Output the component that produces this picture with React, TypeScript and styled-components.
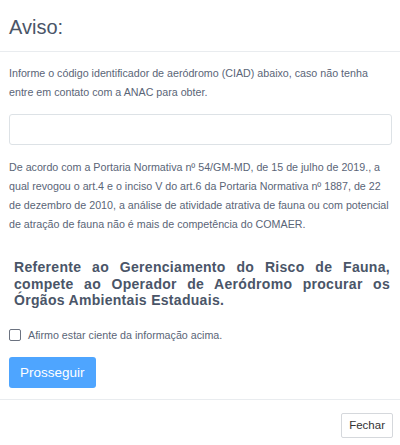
import React, { useState } from 'react'
import styled, { createGlobalStyle } from 'styled-components'

const GlobalStyle = createGlobalStyle`
    html, body {
        margin: 0;
        padding: 0;
        background: #fff;
        font-family: 'Liberation Sans', Arial, sans-serif;
    }
`

const Modal = styled.div`
    width: 400px;
    height: 445px;
    background: #fff;
    display: flex;
    flex-direction: column;
    color: #4a5568;
    overflow: hidden;
`

const Header = styled.div`
    flex-shrink: 0;
    height: 52px;
    padding: 4px 9px 0;
    display: flex;
    align-items: center;
    border-bottom: 1px solid #e9ecef;
    box-sizing: border-box;
`

const Title = styled.h4`
    margin: 0;
    font-size: 20px;
    font-weight: 400;
    color: #4a5568;
`

const Body = styled.div`
    flex-shrink: 0;
    padding: 12px 8px 11px 9px;
    border-bottom: 1px solid #e9ecef;
`

const Text = styled.p`
    margin: 0;
    font-size: 10.7px;
    line-height: 19px;
    color: #5a6577;
`

const Input = styled.input`
    display: block;
    box-sizing: border-box;
    width: 100%;
    height: 31px;
    margin: 12px 0 13px;
    border: 1px solid #dde2e6;
    border-radius: 3px;
    font-size: 13px;
    padding: 0 8px;
    outline: none;
`

const Notice = styled.p`
    margin: 25px 2px 0 5px;
    font-size: 14px;
    letter-spacing: 0.3px;
    font-weight: 700;
    line-height: 16.5px;
    text-align: justify;
    color: #4a5568;
`

const CheckRow = styled.label`
    display: flex;
    align-items: center;
    gap: 7px;
    margin-top: 20px;
    font-size: 10.7px;
    line-height: 12px;
    color: #5a6577;
    cursor: pointer;
`

const Box = styled.span<{ $checked: boolean }>`
    width: 10px;
    height: 10px;
    border: 1px solid #6b7280;
    border-radius: 2px;
    background: ${(p) => (p.$checked ? '#4da3ff' : '#fff')};
`

const Primary = styled.button`
    display: block;
    margin-top: 16px;
    height: 31px;
    padding: 0 11px;
    border: none;
    border-radius: 3px;
    background: #4ea5ff;
    color: #fff;
    font-family: inherit;
    font-size: 13.5px;
`

const Footer = styled.div`
    flex: 1;
    display: flex;
    justify-content: flex-end;
    align-items: flex-start;
    padding: 13px 7px 0 0;
`

const Secondary = styled.button`
    height: 25px;
    padding: 0 7px;
    border: 1px solid #d5d8dc;
    border-radius: 2px;
    background: #fff;
    color: #333;
    font-family: inherit;
    font-size: 11.5px;
`

export default function App() {
    const [checked, setChecked] = useState(false)
    return (
        <>
            <GlobalStyle />
            <Modal>
                <Header>
                    <Title>Aviso:</Title>
                </Header>
                <Body>
                    <Text>
                        Informe o código identificador de aeródromo (CIAD) abaixo, caso não tenha entre em contato com
                        a ANAC para obter.
                    </Text>
                    <Input />
                    <Text>
                        De acordo com a Portaria Normativa nº 54/GM-MD, de 15 de julho de 2019., a qual revogou o
                        art.4 e o inciso V do art.6 da Portaria Normativa nº 1887, de 22 de dezembro de 2010, a
                        análise de atividade atrativa de fauna ou com potencial de atração de fauna não é mais de
                        competência do COMAER.
                    </Text>
                    <Notice>
                        Referente ao Gerenciamento do Risco de Fauna, compete ao Operador de Aeródromo procurar os
                        Órgãos Ambientais Estaduais.
                    </Notice>
                    <CheckRow onClick={() => setChecked(!checked)}>
                        <Box $checked={checked} />
                        Afirmo estar ciente da informação acima.
                    </CheckRow>
                    <Primary>Prosseguir</Primary>
                </Body>
                <Footer>
                    <Secondary>Fechar</Secondary>
                </Footer>
            </Modal>
        </>
    )
}
